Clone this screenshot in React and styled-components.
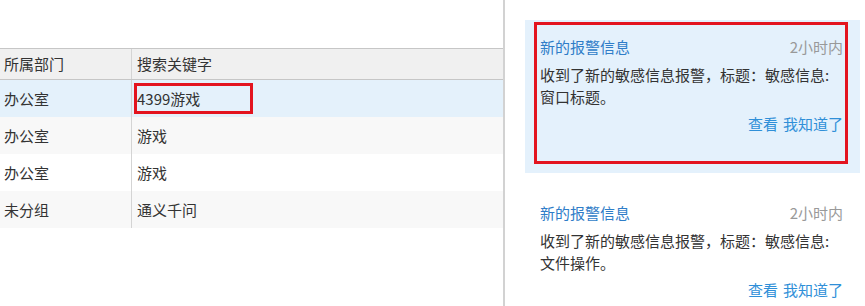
import styled, { createGlobalStyle } from 'styled-components';

const GlobalStyle = createGlobalStyle`
  html, body {
    margin: 0;
    padding: 0;
    background: #ffffff;
  }
  body {
    font-family: "Noto Sans CJK SC", "Noto Sans", sans-serif;
    font-size: 15px;
    color: #333;
  }
`

const Page = styled.div`
  display: flex;
  width: 865px;
  height: 306px;
  overflow: hidden;
`

const TablePane = styled.div`
  width: 503px;
  padding-top: 48px;
  box-sizing: border-box;
`

const Table = styled.div`
  display: flex;
  flex-direction: column;
`

const Row = styled.div`
  display: grid;
  grid-template-columns: 132px 1fr;
  height: ${p => (p.$head ? '30px' : '37px')};
  background: ${p => p.$bg};
  border-top: ${p => (p.$head ? '1px solid #c6c6c6' : 'none')};
  border-bottom: ${p => (p.$head ? '1px solid #c6c6c6' : 'none')};
`

const Cell = styled.div`
  position: relative;
  display: flex;
  align-items: center;
  padding-left: ${p => (p.$first ? '4px' : '5px')};
  border-right: ${p => (p.$first ? '1px solid #d4d4d4' : 'none')};
  color: #333;
  line-height: 20px;
  white-space: nowrap;
`

const Mark = styled.div`
  position: absolute;
  left: ${p => p.$l}px;
  top: ${p => p.$t}px;
  width: ${p => p.$w}px;
  height: ${p => p.$h}px;
  border: 3px solid #e3141f;
  box-sizing: border-box;
  pointer-events: none;
`

const Divider = styled.div`
  width: 2px;
  background: #d2d2d2;
`

const SidePane = styled.div`
  flex: 1;
  display: flex;
  flex-direction: column;
  gap: 13px;
  padding: 20px 5px 0 20px;
`

const Card = styled.div`
  position: relative;
  height: 153px;
  box-sizing: border-box;
  padding: 16px 17px 0 15px;
  background: ${p => (p.$active ? '#e4f1fc' : '#ffffff')};
  flex-shrink: 0;
`

const CardHead = styled.div`
  display: flex;
  justify-content: space-between;
  line-height: 22px;
  margin-bottom: 6px;
`

const Title = styled.span`
  color: #2f7dc8;
`

const Time = styled.span`
  color: #999;
`

const Body = styled.div`
  line-height: 22px;
  color: #333;
`

const Actions = styled.div`
  display: flex;
  justify-content: flex-end;
  gap: 5px;
  margin-top: 5px;
  line-height: 22px;
`

const Link = styled.span`
  color: #2f8fd8;
  cursor: pointer;
`

const rows = [
  { dept: '办公室', key: '4399游戏', bg: '#e4f1fb', marked: true },
  { dept: '办公室', key: '游戏', bg: '#f8f8f8' },
  { dept: '办公室', key: '游戏', bg: '#ffffff' },
  { dept: '未分组', key: '通义千问', bg: '#f8f8f8' },
]

const alerts = [
  { body: '收到了新的敏感信息报警，标题：敏感信息:', tail: '窗口标题。', active: true },
  { body: '收到了新的敏感信息报警，标题：敏感信息:', tail: '文件操作。' },
]

const App = () => {
  return (
    <>
      <GlobalStyle />
      <Page>
        <TablePane>
          <Table>
            <Row $head $bg="#f0f0f0">
              <Cell $first>所属部门</Cell>
              <Cell>搜索关键字</Cell>
            </Row>
            {rows.map((r, i) => (
              <Row key={i} $bg={r.bg}>
                <Cell $first>{r.dept}</Cell>
                <Cell>
                  {r.key}
                  {r.marked && <Mark $l={2} $t={3} $w={119} $h={31} />}
                </Cell>
              </Row>
            ))}
          </Table>
        </TablePane>
        <Divider />
        <SidePane>
          {alerts.map((a, i) => (
            <Card key={i} $active={a.active}>
              <CardHead>
                <Title>新的报警信息</Title>
                <Time>2小时内</Time>
              </CardHead>
              <Body>
                {a.body}
                <br />
                {a.tail}
              </Body>
              <Actions>
                <Link>查看</Link>
                <Link>我知道了</Link>
              </Actions>
              {a.active && <Mark $l={9} $t={2} $w={314} $h={142} />}
            </Card>
          ))}
        </SidePane>
      </Page>
    </>
  )
}

export default App;
